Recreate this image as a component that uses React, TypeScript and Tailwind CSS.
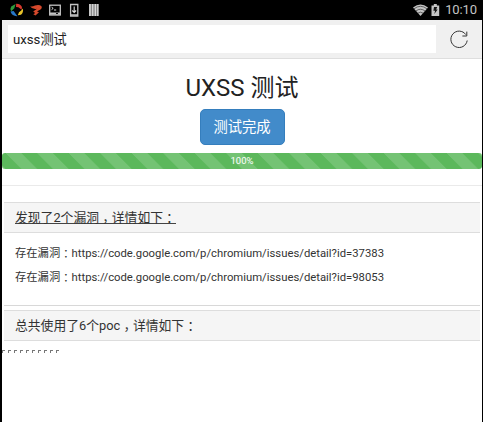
import React from 'react';

const cjk = "font-['Roboto','Noto_Sans_CJK_SC',sans-serif]";

function Colon() {
  return <span lang="zh-TW" className="relative top-px font-['Noto_Sans_CJK_TC',sans-serif]">：</span>;
}

function Comma() {
  return <span lang="zh-TW" className="relative top-1 font-['Noto_Sans_CJK_TC',sans-serif]">，</span>;
}

function StatusBar() {
  return (
    <header className="flex h-5 shrink-0 items-center bg-black pl-2 pr-1.5 text-[#c4c4c4]">
      <svg width="100" height="20" viewBox="0 0 100 20">
        <path d="M3.2 6.4L7.6 4L6.2 8.6L3.2 11.2Q1.6 9 3.2 6.4Z" fill="#2f9a3c" />
        <path d="M8.2 3.8Q12 3.6 14 7L13.6 9.8L10.4 7.2L8 7Z" fill="#d8382c" />
        <path d="M14.8 8.4Q15.8 12 13 14.8L9.8 15.2L11 12.2L13.2 10.4Z" fill="#e8c22a" />
        <path d="M2.4 11.6L5.6 11L9.4 16.2Q4.4 16.6 2.4 11.6Z" fill="#2878c8" />
        <path d="M22 6.2Q24 7 27 5.6Q31 4 33.5 6.3Q34.7 9 31 10.2L29 11.5L31 12.3L27.5 15.5L25.3 14.3L27.2 13L25.2 11.6L29 8.8Q24.5 9.8 22 6.2Z" fill="#d6492c" />
        <rect x="41.7" y="5.2" width="10.6" height="9.8" fill="#000" stroke="#c4c4c4" strokeWidth="1.3" />
        <path d="M43.6 7.2l1.6 1.2-1.6 1.2M46 10h2.2" fill="none" stroke="#ddd" />
        <path d="M42 12.5h10v2.2H42z" fill="#c4c4c4" />
        <path d="M48 13h2v1h-2z" fill="#111" />
        <path d="M62.6 4.5h7.2v11.5h-7.2z" fill="none" stroke="#c4c4c4" strokeWidth="1.3" />
        <path d="M66.2 6.5v6M64.3 10.5l1.9 2 1.9-2" fill="none" stroke="#ddd" strokeWidth="1.1" />
        <path d="M63 15h7" stroke="#c4c4c4" strokeWidth="1.5" />
        <path d="M81 4h9.5v12H81z" fill="#aaa" />
        <path d="M82 4v12M84.8 4v12M87.3 4v12M89.8 4v12" stroke="#ddd" strokeWidth="1.2" />
        <path d="M83.4 4v12M86 4v12M88.6 4v12" stroke="#666" strokeWidth=".6" />
      </svg>
      <svg className="ml-auto" width="29" height="20" viewBox="0 0 29 20">
        <g transform="translate(2 0)">
          <path d="M0 7.4Q7.5 1.4 15 7.4L7.5 16Z" fill="#c4c4c4" />
          <path d="M1 8.8Q7.5 3.8 14 8.8M2.9 11Q7.5 7.5 12.1 11M4.8 13.2Q7.5 11.2 10.2 13.2" fill="none" stroke="#333" strokeWidth=".7" />
        </g>
        <path d="M20.5 5.5h2.3V4h3v1.5h2.4V16h-7.7z" fill="#c4c4c4" />
        <path d="M23 7h3.3l-1.2 2.5h1.6L23.3 14l.8-3.2h-1.7z" fill="#161616" />
      </svg>
      <span className="ml-[5px] font-['Roboto',sans-serif] text-[13px] leading-5 tracking-[-0.1px]">10:10</span>
    </header>
  );
}

function AddressBar() {
  return (
    <div className="flex h-[39px] shrink-0 items-center border-b border-[#dedede] bg-[#f0f0f0] pl-[6px] pr-[13px]">
      <div className="flex h-7 w-[428px] items-center bg-white pl-[5px] pt-0.5 text-[13.2px] text-[#222]">
        <span>uxss测试</span>
      </div>
      <svg className="ml-auto" width="20" height="20" viewBox="0 0 20 20" fill="none" stroke="#333" strokeWidth="1">
        <path d="M16.8 5.6A8.2 8.2 0 1 0 18.2 11.5" />
        <path d="M17.8 2.6v4.4h-4.4" />
      </svg>
    </div>
  );
}

const issues = ['37383', '98053'];

export default function App() {
  return (
    <div lang="zh-CN" className={`flex h-[422px] w-[483px] flex-col overflow-hidden bg-black ${cjk}`}>
      <StatusBar />
      <div className="ml-[2px] mr-px flex min-h-0 flex-1 flex-col bg-white text-[#333]">
        <AddressBar />
        <h1 className="mt-[13px] h-8 text-center text-[24px] font-normal leading-8 text-[#222]">UXSS 测试</h1>
        <button className="mx-auto mt-[5px] h-9 w-[85px] shrink-0 rounded-[5px] border border-[#357ebd] bg-[#428bca] text-[14.3px] leading-none text-white">
          测试完成
        </button>
        <div className="mt-2 h-4 shrink-0 rounded-[3px] bg-[#5cb85c] bg-[linear-gradient(45deg,rgba(255,255,255,.15)_25%,transparent_25%,transparent_50%,rgba(255,255,255,.15)_50%,rgba(255,255,255,.15)_75%,transparent_75%)] bg-[length:31.5px_31.5px] bg-[position:4px_0px] text-center text-[9.5px] leading-4 text-white">
          100%
        </div>
        <hr className="mt-4 border-[#eaeaea]" />
        <section className="ml-[2px] mr-[2px] mt-4 h-[104px] shrink-0 border-b border-[#d8d8d8]">
          <div className="flex h-[31px] items-center border-y border-[#dddddd] bg-[#f5f5f5] pb-px pl-[11px] text-[12.8px]">
            <span className="h-[14px] border-b border-[#444] leading-[13px]">发现了2个漏洞<Comma />详情如下<Colon /></span>
          </div>
          <div className="pl-[11px] pt-[7px] text-[11.3px]">
            {issues.map((id) => (
              <p key={id} className="h-6 leading-6">
                存在漏洞<Colon />https://code.google.com/p/chromium/issues/detail?id={id}
              </p>
            ))}
          </div>
        </section>
        <section className="mx-[2px] mt-1 flex h-[31px] shrink-0 items-center border-y border-[#dddddd] bg-[#f5f5f5] pl-[11px] text-[12.8px]">
          <span>总共使用了6个poc<Comma />详情如下<Colon /></span>
        </section>
        <div className="mt-[9px] flex gap-[3px]">
          {Array.from({ length: 10 }, (_, i) => (
            <i key={i} className="h-[3px] w-[3px] border-l border-t border-[#777]" />
          ))}
        </div>
      </div>
    </div>
  );
}
